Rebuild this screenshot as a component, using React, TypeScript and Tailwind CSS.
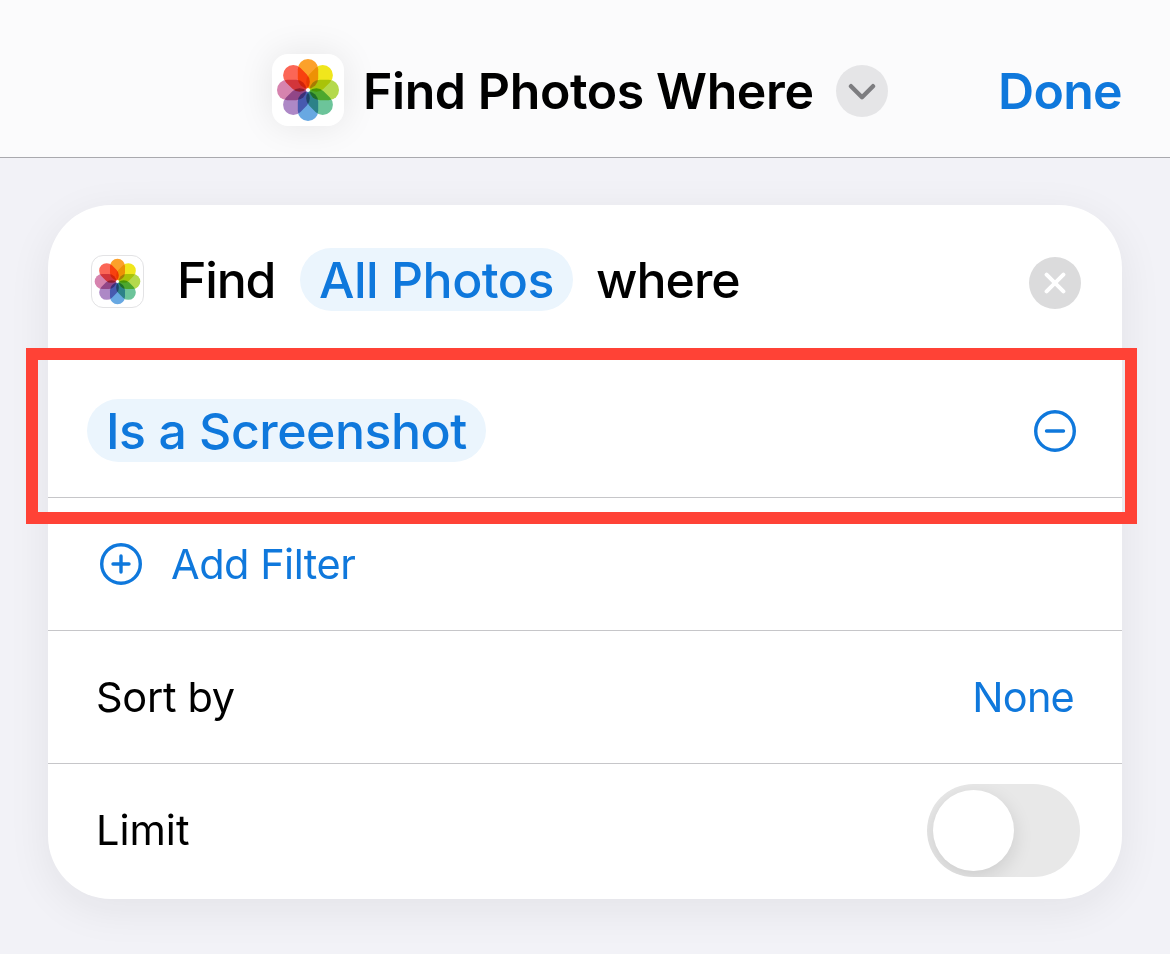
import React from "react";

const petals = [
  { angle: 0, color: "#fca12a" },
  { angle: 45, color: "#f0e61c" },
  { angle: 90, color: "#b4d94c" },
  { angle: 135, color: "#6cc49a" },
  { angle: 180, color: "#68a8e2" },
  { angle: 225, color: "#ad88c6" },
  { angle: 270, color: "#d683ae" },
  { angle: 315, color: "#fb6656" },
];

const PhotosIcon = ({ className }: { className: string }) => (
  <svg viewBox="0 0 72 72" className={className}>
    <g className="isolate">
      {petals.map(({ angle, color }) => (
        <rect
          key={angle}
          x="25.8"
          y="5"
          width="20.4"
          height="29.4"
          rx="10.2"
          fill={color}
          transform={`rotate(${angle} 36 36)`}
          className="mix-blend-multiply"
        />
      ))}
    </g>
    <circle cx="36" cy="36" r="1.8" fill="white" />
  </svg>
);

const CircleIcon = ({ plus }: { plus?: boolean }) => (
  <svg
    viewBox="0 0 42 42"
    className="size-[42px] shrink-0"
    fill="none"
    stroke="#0f78dc"
    strokeWidth="3.4"
    strokeLinecap="round"
  >
    <circle cx="21" cy="21" r="19.3" />
    <path d={plus ? "M13 21H29M21 13V29" : "M12.5 21H29.5"} />
  </svg>
);

const Token = ({ children }: { children: React.ReactNode }) => (
  <span className="flex h-[63px] items-center rounded-full bg-[#ebf5fd] px-[19px] text-[50px] font-medium tracking-[-0.5px] text-[#0f78dc]">
    {children}
  </span>
);

const Header = () => (
  <header className="flex h-[158px] items-center border-b border-[#a9a9ae] bg-[#fbfbfc] pt-[25px] pr-12 pl-[272px]">
    <div className="-mt-0.5 size-[72px] shrink-0 rounded-2xl bg-white shadow-[0_0_36px_rgba(0,0,0,0.09)]">
      <PhotosIcon className="size-[72px]" />
    </div>
    <h1 className="ml-[19px] w-[473px] text-[50px] font-semibold tracking-[-0.4px] whitespace-nowrap text-black">
      Find Photos Where
    </h1>
    <button className="flex size-[52px] shrink-0 items-center justify-center rounded-full bg-[#e5e5e7]">
      <svg
        viewBox="0 0 28 18"
        className="h-[18px] w-7"
        fill="none"
        stroke="#7d7d80"
        strokeWidth="4.4"
        strokeLinecap="round"
        strokeLinejoin="round"
      >
        <path d="M3 4.2L14 15.2L25 4.2" />
      </svg>
    </button>
    <button className="ml-auto text-[50px] font-semibold tracking-[-0.7px] text-[#0f78dc]">
      Done
    </button>
  </header>
);

export default function App() {
  return (
    <div className="h-[954px] w-[1170px] overflow-hidden bg-[#f2f2f7] font-['Inter',sans-serif] leading-none text-black">
      <Header />
      <main className="px-12 pt-[47px]">
        <section className="relative h-[694px] w-[1074px] rounded-[63px] bg-white shadow-[0_10px_44px_rgba(30,30,35,0.07)]">
          <div className="flex h-[155px] items-center pr-[41px] pb-[6px] pl-[43px]">
            <div className="mt-[4px] flex size-[53px] items-center justify-center rounded-xl border border-[#e3e3e5]">
              <PhotosIcon className="size-[53px] shrink-0" />
            </div>
            <span className="ml-[33px] w-[123px] text-[50px] font-medium tracking-[-1.2px]">
              Find
            </span>
            <Token>All Photos</Token>
            <span className="ml-[23px] text-[50px] font-medium tracking-[-1px]">
              where
            </span>
            <button className="mt-[6px] ml-auto flex size-[52px] items-center justify-center rounded-full bg-[#dbdbdc]">
              <svg
                viewBox="0 0 22 22"
                className="size-[22px]"
                stroke="white"
                strokeWidth="4"
                strokeLinecap="round"
              >
                <path d="M2.6 2.6L19.4 19.4M19.4 2.6L2.6 19.4" />
              </svg>
            </button>
          </div>

          <div className="flex h-[138px] items-center justify-between border-b border-[#c6c6c9] pt-[4px] pr-[46px] pl-[39px]">
            <Token>Is a Screenshot</Token>
            <CircleIcon />
          </div>

          <div className="flex h-[133px] items-center border-b border-[#c6c6c9] pl-[52px] text-[#0f78dc]">
            <CircleIcon plus />
            <span className="mt-0.5 ml-[29px] text-[41.5px] tracking-[-0.5px]">
              Add Filter
            </span>
          </div>

          <div className="flex h-[133px] items-center justify-between border-b border-[#c6c6c9] pt-0.5 pr-12 pl-12 text-[41.5px]">
            <span className="tracking-[-0.3px]">Sort by</span>
            <span className="tracking-[-0.8px] text-[#0f78dc]">None</span>
          </div>

          <div className="flex h-[133px] items-center justify-between pr-[42px] pl-12 text-[41.5px]">
            <span className="pt-px">Limit</span>
            <div className="flex h-[93px] w-[153px] items-center overflow-hidden rounded-full bg-[#e8e8e8] pl-1.5">
              <div className="size-[81px] rounded-full bg-white shadow-[0_6px_20px_rgba(0,0,0,0.12)]" />
            </div>
          </div>

          <div className="absolute top-[143px] -left-[22px] h-[176px] w-[1111px] border-[12px] border-[#ff4236]" />
        </section>
      </main>
    </div>
  );
}
